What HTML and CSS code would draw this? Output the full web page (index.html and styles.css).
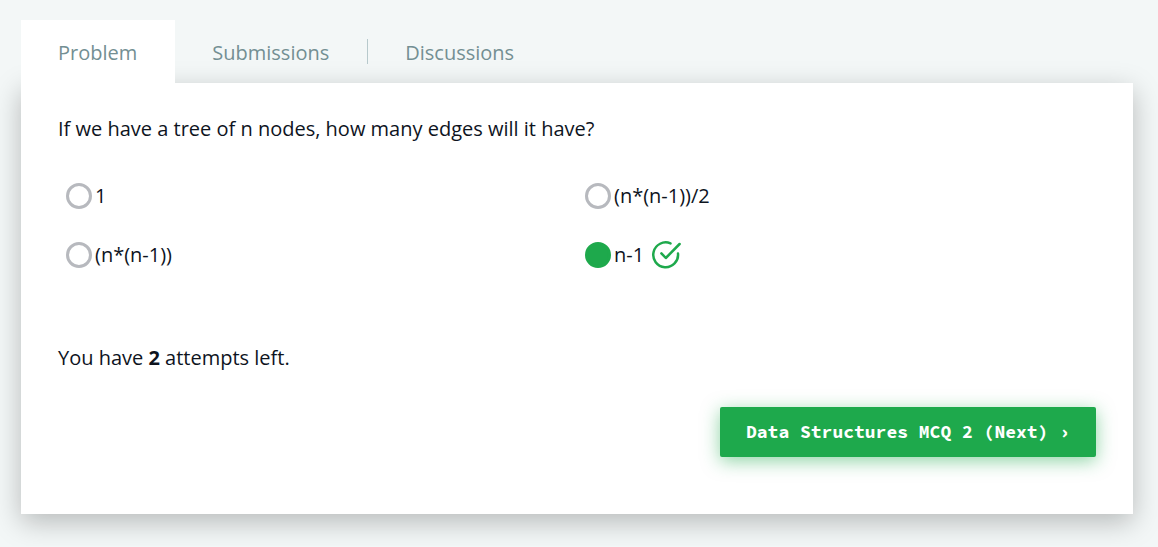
FILE: index.html
```html
<!DOCTYPE html>
<html lang="en">
<head>
<meta charset="utf-8">
<meta name="viewport" content="width=device-width, initial-scale=1">
<title>Data Structures MCQ</title>
<link rel="stylesheet" href="styles.css">
</head>
<body class="page">
<nav class="tabs">
  <a class="tab tab-active" href="#problem">Problem</a>
  <a class="tab" href="#submissions">Submissions</a>
  <span class="tab-divider"></span>
  <a class="tab" href="#discussions">Discussions</a>
</nav>
<main class="card" id="problem">
  <form class="quiz">
    <p class="text" id="question">If we have a tree of n nodes, how many edges will it have?</p>
    <div class="options" role="radiogroup" aria-labelledby="question">
      <div class="option"><input class="radio" type="radio" name="answer" id="a1"><label for="a1">1</label></div>
      <div class="option"><input class="radio" type="radio" name="answer" id="a2"><label for="a2">(n*(n-1))/2</label></div>
      <div class="option"><input class="radio" type="radio" name="answer" id="a3"><label for="a3">(n*(n-1))</label></div>
      <div class="option"><input class="radio" type="radio" name="answer" id="a4" checked><label for="a4">n-1</label>
        <svg class="check" viewBox="0 0 30 30" aria-hidden="true"><path d="M19.5 3.4A12.4 12.4 0 1 0 27 13.6M10.4 13.4l4.4 4.6L28.6 4"/></svg>
      </div>
    </div>
    <p class="text attempts">You have <strong>2</strong> attempts left.</p>
    <div class="actions"><button class="next" type="button">Data Structures MCQ 2 (Next) ›</button></div>
  </form>
</main>
</body>
</html>
```
FILE: styles.css
```css
* {
  box-sizing: border-box;
}

.page {
  margin: 0;
  padding: 20px 25px 32px 21px;
  background: #f3f7f7;
  color: #0e141e;
  font: 20px/28px "Open Sans", "Noto Sans", sans-serif;
}

.tabs {
  position: relative;
  z-index: 1;
  display: flex;
  align-items: center;
}

.tab {
  padding: 19px 38px 16px 37px;
  color: #738f93;
  text-decoration: none;
}

.tab-active {
  background: #fff;
}

.tab-divider {
  width: 1px;
  height: 25px;
  background: #b7c9cc;
}

.card {
  padding: 32px 37px 57px;
  background: #fff;
  box-shadow: 0 8px 26px rgba(0, 0, 0, 0.25);
}

.text {
  margin: 0;
}

.options {
  display: grid;
  grid-template-columns: 1fr 1fr;
  row-gap: 29px;
  margin-top: 38px;
}

.option {
  display: flex;
  align-items: center;
  height: 30px;
  padding-left: 8px;
}

.radio {
  appearance: none;
  width: 26px;
  height: 26px;
  margin: 0 3px 0 0;
  border: 3px solid #b7b9be;
  border-radius: 50%;
  background: #fff;
}

.radio:checked {
  border-color: #1ea94c;
  background: #1ea94c;
}

.check {
  width: 30px;
  height: 30px;
  margin-left: 7px;
  fill: none;
  stroke: #1ea94c;
  stroke-width: 2.5;
  stroke-linecap: round;
  stroke-linejoin: round;
}

.attempts {
  margin-top: 74px;
}

.actions {
  display: flex;
  justify-content: flex-end;
  margin-top: 35px;
}

.next {
  padding: 13px 26px;
  border: 0;
  border-radius: 2px;
  background: #1ea94c;
  color: #fff;
  font: bold 18px/24px "Source Code Pro", "DejaVu Sans Mono", monospace;
  box-shadow: 0 4px 18px rgba(30, 169, 76, 0.5);
}
```
